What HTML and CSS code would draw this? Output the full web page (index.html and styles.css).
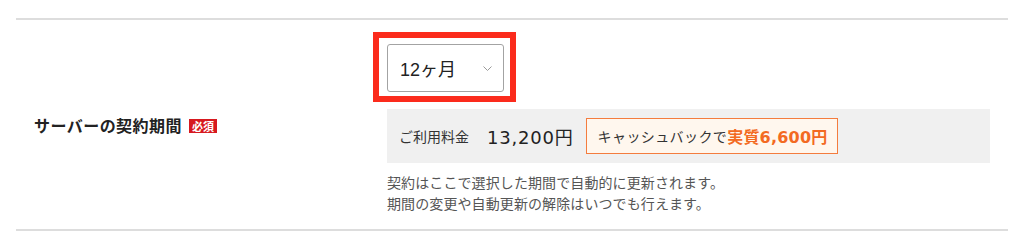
FILE: index.html
```html
<!DOCTYPE html>
<html lang="ja">
<head>
<meta charset="utf-8">
<title>サーバーの契約期間</title>
<link rel="stylesheet" href="styles.css">
</head>
<body>
<div class="wrap">
  <div class="row">
    <div class="label-cell">
      <span class="label">サーバーの契約期間</span>
      <span class="badge">必須</span>
    </div>
    <div class="value-cell">
      <div class="select">
        <span class="select-text">12ヶ月</span>
        <svg class="chevron" width="9" height="5" viewBox="0 0 9 5"><polyline points="0.5,0.5 4.5,4.5 8.5,0.5" fill="none" stroke="#9a9a9a" stroke-width="1"/></svg>
      </div>
      <div class="highlight"></div>
      <div class="price-box">
        <span class="price-label">ご利用料金</span>
        <span class="price">13,200円</span>
        <span class="cashback">キャッシュバックで<span class="cashback-strong">実質6,600円</span></span>
      </div>
      <p class="desc">契約はここで選択した期間で自動的に更新されます。<br>期間の変更や自動更新の解除はいつでも行えます。</p>
    </div>
  </div>
</div>
</body>
</html>
```

FILE: styles.css
```css
html, body {
  margin: 0;
  padding: 0;
  background: #ffffff;
}

body {
  font-family: "Noto Sans CJK JP", "Noto Sans", sans-serif;
  color: #333333;
}

.wrap {
  padding: 18px 16px 0 16px;
}

.row {
  display: flex;
  border-top: 2px solid #dddddd;
  border-bottom: 2px solid #dddddd;
}

.label-cell {
  box-sizing: border-box;
  width: 371px;
  flex: none;
  padding-left: 18px;
  display: flex;
  align-items: center;
  gap: 7px;
}

.label {
  font-size: 16px;
  font-weight: 700;
  color: #222222;
  line-height: 20px;
  letter-spacing: 0.45px;
}

.badge {
  background: #d7191f;
  color: #ffffff;
  font-size: 11px;
  font-weight: 700;
  line-height: 14px;
  padding: 0 3px;
  margin-top: 2px;
}

.value-cell {
  flex: 1;
  position: relative;
  padding: 24px 18px 15px 0;
}

.select {
  box-sizing: border-box;
  width: 117px;
  height: 48px;
  border: 1px solid #a3a3a3;
  border-radius: 3px;
  display: flex;
  align-items: center;
  justify-content: space-between;
  padding: 0 11px 0 12px;
  background: #ffffff;
}

.select-text {
  font-family: "Liberation Sans", "Noto Sans CJK JP", sans-serif;
  font-size: 18px;
  color: #222222;
}

.chevron {
  display: block;
  margin-top: 1px;
}

.highlight {
  position: absolute;
  left: -14px;
  top: 12px;
  width: 143px;
  height: 70px;
  box-sizing: border-box;
  border: 6px solid #fb2b1c;
  pointer-events: none;
}

.price-box {
  margin-top: 17px;
  height: 54px;
  background: #f0f0f0;
  display: flex;
  align-items: center;
  padding-left: 12px;
}

.price-label {
  font-size: 14px;
  color: #333333;
}

.price {
  margin-left: 18px;
  font-family: "DejaVu Sans", "Noto Sans CJK JP", sans-serif;
  font-size: 18px;
  letter-spacing: 0.8px;
  color: #222222;
}

.cashback {
  margin-left: 12px;
  box-sizing: border-box;
  height: 36px;
  display: flex;
  align-items: center;
  border: 1px solid #f47c3e;
  background: #fff7ee;
  padding: 0 10px 0 11px;
  font-size: 14px;
  letter-spacing: 0.4px;
  color: #333333;
}

.cashback-strong {
  font-family: "DejaVu Sans", "Noto Sans CJK JP", sans-serif;
  font-size: 16px;
  font-weight: 700;
  letter-spacing: 0.2px;
  color: #f36a22;
}

.desc {
  margin: 9px 0 0 0;
  font-size: 14px;
  line-height: 21px;
  letter-spacing: 0.1px;
  color: #555555;
}
```
